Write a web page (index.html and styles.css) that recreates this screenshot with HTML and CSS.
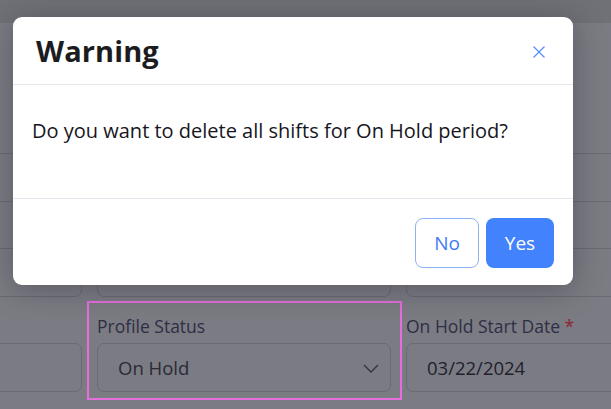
FILE: index.html
```html
<!DOCTYPE html>
<html>
<head>
<meta charset="utf-8">
<link rel="stylesheet" href="styles.css">
</head>
<body>
<div class="page">
  <div class="topbar"></div>
  <div class="form">
    <div class="field"><div class="label">&nbsp;</div><div class="input"></div></div>
    <div class="field"><div class="label">&nbsp;</div><div class="input"></div></div>
    <div class="field"><div class="label">&nbsp;</div><div class="input"></div></div>
    <div class="field"><div class="label">&nbsp;</div><div class="input"></div></div>
    <div class="field"><div class="label">&nbsp;</div><div class="input"></div></div>
    <div class="field"><div class="label">&nbsp;</div><div class="input"></div></div>
    <div class="field"><div class="label">&nbsp;</div><div class="input"></div></div>
    <div class="field highlight"><div class="label">Profile Status</div>
      <div class="input select"><span>On Hold</span>
        <svg class="chev" width="18" height="12" viewBox="0 0 18 12"><path d="M2 3 L9 10 L16 3" fill="none" stroke="#34343f" stroke-width="1.4"/></svg>
      </div>
    </div>
    <div class="field"><div class="label">On Hold Start Date <span class="req">*</span></div>
      <div class="input"><span>03/22/2024</span></div>
    </div>
  </div>
</div>
<div class="modal">
  <div class="m-head">
    <h1 class="title">Warning</h1>
    <svg class="close" width="14" height="14" viewBox="0 0 14 14"><path d="M1.5 1.5 L12.5 12.5 M12.5 1.5 L1.5 12.5" stroke="#5b8ef5" stroke-width="1.3" fill="none"/></svg>
  </div>
  <div class="m-body">Do you want to delete all shifts for On Hold period?</div>
  <div class="m-foot">
    <button class="btn no">No</button>
    <button class="btn yes">Yes</button>
  </div>
</div>
</body>
</html>
```
FILE: styles.css
```css
html, body {
  margin: 0;
  padding: 0;
  width: 611px;
  height: 409px;
  overflow: hidden;
  font-family: "Open Sans", "Noto Sans", sans-serif;
}
body {
  background: #7b7b83;
  position: relative;
}
.page {
  display: flex;
  flex-direction: column;
  height: 409px;
  overflow: hidden;
}
.topbar {
  height: 23px;
  flex: none;
  background: #707077;
}
.form {
  margin-top: 101px;
  margin-left: -212px;
  display: grid;
  grid-template-columns: 294px 294px 294px;
  column-gap: 15px;
  row-gap: 17px;
}
.field {
  display: flex;
  flex-direction: column;
  gap: 4px;
  position: relative;
}
.label {
  height: 25px;
  line-height: 25px;
  font-size: 17.5px;
  color: #2e2f44;
  white-space: nowrap;
}
.req { color: #8a2530; }
.input {
  height: 47px;
  border: 1px solid #6a6a72;
  border-radius: 7px;
  display: flex;
  align-items: center;
  padding: 0 20px;
  font-size: 18.5px;
  color: #1f1f2e;
}
.select {
  justify-content: space-between;
  color: #2a2a36;
  padding-right: 10px;
}
.chev { display: block; }
.highlight::after {
  content: "";
  position: absolute;
  left: -10px;
  right: -11px;
  top: -13px;
  bottom: -8px;
  border: 2px solid #e46fdc;
}
.modal {
  position: absolute;
  left: 13px;
  top: 17px;
  width: 560px;
  height: 268px;
  background: #fff;
  border-radius: 9px;
  box-shadow: 0 4px 30px rgba(30, 30, 40, 0.35);
  display: flex;
  flex-direction: column;
}
.m-head {
  height: 67px;
  flex: none;
  border-bottom: 1px solid #e6e7ef;
  display: flex;
  align-items: center;
  justify-content: space-between;
  padding: 0 27px 0 23px;
}
.title {
  margin: 0;
  font-size: 29px;
  font-weight: 700;
  color: #1c1c1e;
  letter-spacing: 0.1px;
}
.close { display: block; margin-top: 2px; }
.m-body {
  height: 114px;
  flex: none;
  border-bottom: 1px solid #e6e7ef;
  padding: 32px 19px 0 19px;
  box-sizing: border-box;
  font-size: 20px;
  color: #16161e;
}
.m-foot {
  flex: 1;
  display: flex;
  justify-content: flex-end;
  align-items: flex-start;
  gap: 7px;
  padding: 19px 19px 0 0;
}
.btn {
  height: 50px;
  border-radius: 8px;
  font-family: "Open Sans", "Noto Sans", sans-serif;
  font-size: 19px;
  cursor: pointer;
}
.no {
  width: 64px;
  background: #fff;
  border: 1px solid #8db2f7;
  color: #3f7af4;
}
.yes {
  width: 68px;
  background: #4282fc;
  border: none;
  color: #fff;
}
```
